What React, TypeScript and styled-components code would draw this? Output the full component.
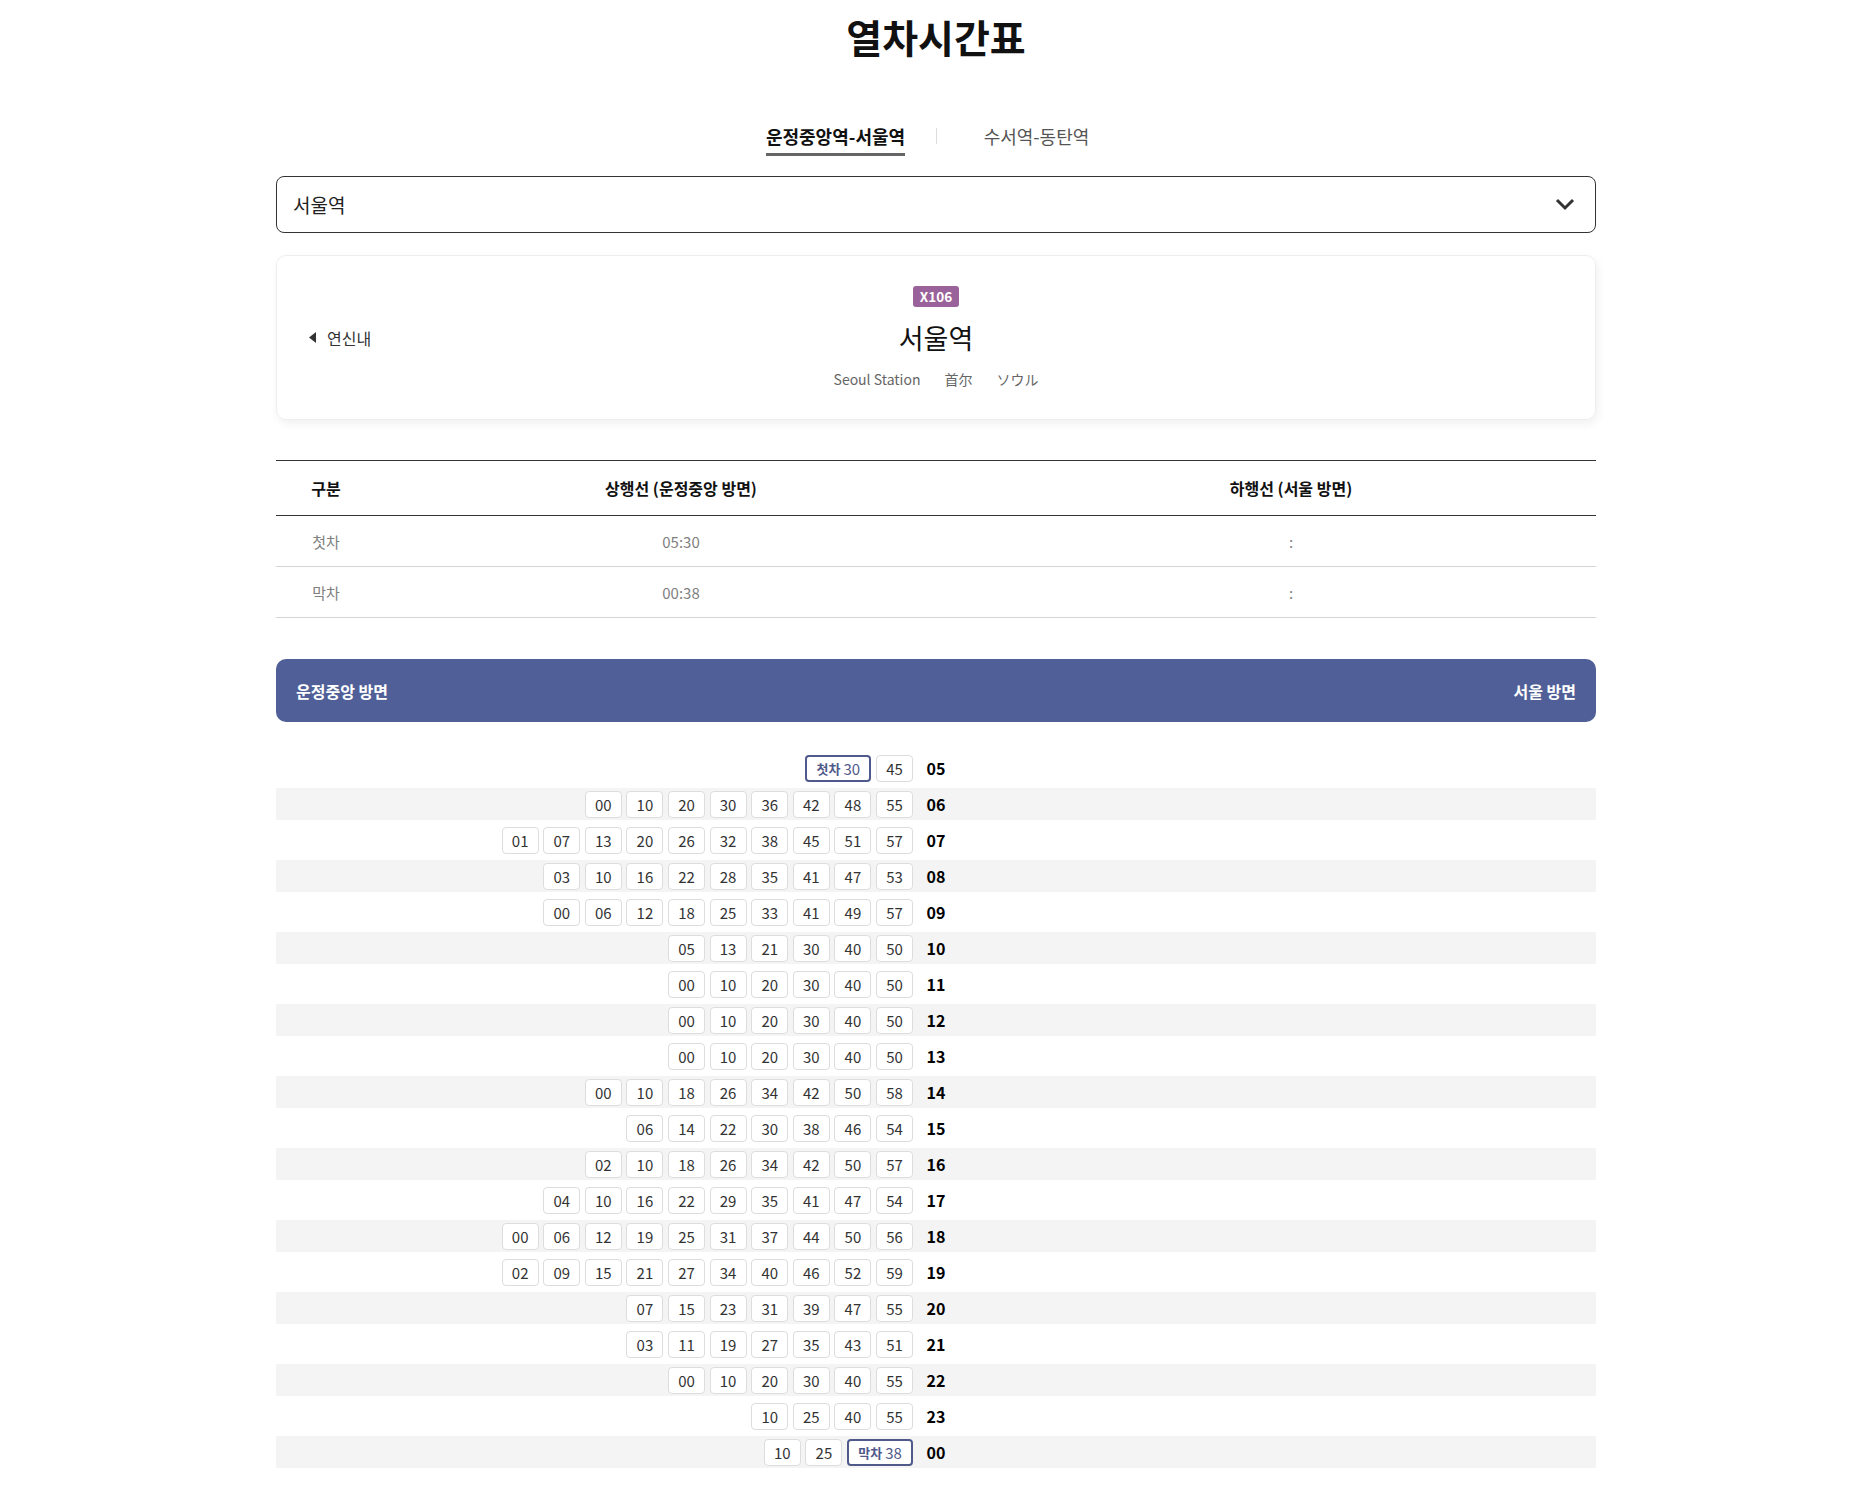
import React from 'react';
import styled, { createGlobalStyle } from 'styled-components';

const GlobalStyle = createGlobalStyle`
  * { box-sizing: border-box; }
  body {
    margin: 0;
    padding: 0 0 0 7px;
    background: #fff;
    font-family: "Noto Sans CJK KR", "Noto Sans", sans-serif;
    color: #222;
  }
`;

const Page = styled.div`
  width: 1320px;
  margin: 0 auto;
  padding-top: 12px;
  padding-bottom: 34px;
`;

const Title = styled.h1`
  margin: 0;
  text-align: center;
  font-size: 39px;
  line-height: 48px;
  font-weight: 700;
  color: #111;
`;

const Tabs = styled.div`
  display: flex;
  justify-content: center;
  align-items: center;
  margin-top: 64px;
`;

const Tab = styled.div`
  width: 200px;
  text-align: center;
`;

const TabLabel = styled.span<{ $active?: boolean }>`
  display: inline-block;
  font-size: 18px;
  line-height: 24px;
  padding-bottom: 5px;
  font-weight: ${(p) => (p.$active ? 700 : 400)};
  color: ${(p) => (p.$active ? '#111' : '#555')};
  border-bottom: 3px solid ${(p) => (p.$active ? '#666' : 'transparent')};
`;

const TabDivider = styled.span`
  width: 1px;
  height: 16px;
  background: #ddd;
  margin-bottom: 8px;
`;

const SelectBox = styled.div`
  margin-top: 20px;
  height: 57px;
  border: 1px solid #333;
  border-radius: 8px;
  display: flex;
  align-items: center;
  justify-content: space-between;
  padding: 0 20px 0 16px;
  font-size: 19px;
  color: #222;
`;

const Card = styled.div`
  margin-top: 22px;
  height: 165px;
  border: 1px solid #eee;
  border-radius: 10px;
  box-shadow: 2px 4px 10px rgba(0, 0, 0, 0.06);
  display: grid;
  grid-template-columns: 1fr auto 1fr;
  align-items: center;
`;

const PrevStation = styled.div`
  display: flex;
  align-items: center;
  gap: 11px;
  padding-left: 32px;
  font-size: 16px;
  color: #333;
`;

const StationInfo = styled.div`
  display: flex;
  flex-direction: column;
  align-items: center;
`;

const Badge = styled.span`
  display: inline-flex;
  align-items: center;
  justify-content: center;
  height: 21px;
  padding: 0 7px;
  border-radius: 3px;
  background: #9a629a;
  color: #fff;
  font-size: 13.5px;
  font-weight: 700;
`;

const StationName = styled.div`
  margin-top: 14px;
  font-size: 27px;
  line-height: 34px;
  color: #111;
`;

const SubNames = styled.div`
  margin-top: 13px;
  display: flex;
  gap: 24px;
  font-size: 14px;
  line-height: 22px;
  color: #666;
`;

const Table = styled.div`
  margin-top: 40px;
  border-top: 1px solid #333;
`;

const TRow = styled.div<{ $head?: boolean }>`
  display: grid;
  grid-template-columns: 100px 1fr 1fr;
  align-items: center;
  height: ${(p) => (p.$head ? '55px' : '51px')};
  border-bottom: 1px solid ${(p) => (p.$head ? '#333' : '#d4d4d4')};
  font-size: ${(p) => (p.$head ? '16px' : '15px')};
  font-weight: ${(p) => (p.$head ? 700 : 400)};
  color: ${(p) => (p.$head ? '#111' : '#808080')};
  text-align: center;
`;

const DirectionBar = styled.div`
  margin-top: 41px;
  height: 63px;
  border-radius: 10px;
  background: #505f97;
  color: #fff;
  display: flex;
  align-items: center;
  justify-content: space-between;
  padding: 0 20px 0 20px;
  font-size: 16px;
  font-weight: 700;
`;

const Timetable = styled.div`
  margin-top: 30px;
  display: flex;
  flex-direction: column;
  gap: 4px;
`;

const HourRow = styled.div<{ $shade: boolean }>`
  display: grid;
  grid-template-columns: 1fr 40px 1fr;
  align-items: center;
  height: 32px;
  background: ${(p) => (p.$shade ? '#f4f4f4' : 'transparent')};
`;

const Minutes = styled.div`
  display: flex;
  justify-content: flex-end;
  gap: 4.6px;
  padding-right: 3px;
`;

const MinuteBox = styled.span<{ $special?: boolean }>`
  display: inline-flex;
  align-items: center;
  justify-content: center;
  gap: 3px;
  min-width: ${(p) => (p.$special ? '66px' : '37px')};
  height: 27px;
  background: #fff;
  border: ${(p) => (p.$special ? '2px solid #4f5a8a' : '1px solid #ddd')};
  border-radius: 4px;
  font-size: 15px;
  color: ${(p) => (p.$special ? '#4f5a8a' : '#333')};
`;

const Tag = styled.b`
  font-size: 13px;
  font-weight: 700;
`;

const Hour = styled.span`
  text-align: center;
  font-size: 16px;
  font-weight: 700;
  color: #000;
`;

const schedule: [string, string[]][] = [
  ['05', ['첫차30', '45']],
  ['06', ['00', '10', '20', '30', '36', '42', '48', '55']],
  ['07', ['01', '07', '13', '20', '26', '32', '38', '45', '51', '57']],
  ['08', ['03', '10', '16', '22', '28', '35', '41', '47', '53']],
  ['09', ['00', '06', '12', '18', '25', '33', '41', '49', '57']],
  ['10', ['05', '13', '21', '30', '40', '50']],
  ['11', ['00', '10', '20', '30', '40', '50']],
  ['12', ['00', '10', '20', '30', '40', '50']],
  ['13', ['00', '10', '20', '30', '40', '50']],
  ['14', ['00', '10', '18', '26', '34', '42', '50', '58']],
  ['15', ['06', '14', '22', '30', '38', '46', '54']],
  ['16', ['02', '10', '18', '26', '34', '42', '50', '57']],
  ['17', ['04', '10', '16', '22', '29', '35', '41', '47', '54']],
  ['18', ['00', '06', '12', '19', '25', '31', '37', '44', '50', '56']],
  ['19', ['02', '09', '15', '21', '27', '34', '40', '46', '52', '59']],
  ['20', ['07', '15', '23', '31', '39', '47', '55']],
  ['21', ['03', '11', '19', '27', '35', '43', '51']],
  ['22', ['00', '10', '20', '30', '40', '55']],
  ['23', ['10', '25', '40', '55']],
  ['00', ['10', '25', '막차38']],
];

const Minute = ({ value }: { value: string }) => {
  const special = value.startsWith('첫차') || value.startsWith('막차');
  if (!special) return <MinuteBox>{value}</MinuteBox>;
  return (
    <MinuteBox $special>
      <Tag>{value.slice(0, 2)}</Tag>
      {value.slice(2)}
    </MinuteBox>
  );
};

const App = () => {
  return (
    <Page>
      <GlobalStyle />
      <Title>열차시간표</Title>

      <Tabs>
        <Tab>
          <TabLabel $active>운정중앙역-서울역</TabLabel>
        </Tab>
        <TabDivider />
        <Tab>
          <TabLabel>수서역-동탄역</TabLabel>
        </Tab>
      </Tabs>

      <SelectBox>
        <span>서울역</span>
        <svg width="20" height="13" viewBox="0 0 20 13">
          <path d="M2 2l8 8 8-8" fill="none" stroke="#333" strokeWidth="3" />
        </svg>
      </SelectBox>

      <Card>
        <PrevStation>
          <svg width="7" height="11" viewBox="0 0 7 11">
            <path d="M7 0v11L0 5.5z" fill="#333" />
          </svg>
          연신내
        </PrevStation>
        <StationInfo>
          <Badge>X106</Badge>
          <StationName>서울역</StationName>
          <SubNames>
            <span>Seoul Station</span>
            <span>首尔</span>
            <span>ソウル</span>
          </SubNames>
        </StationInfo>
        <div />
      </Card>

      <Table>
        <TRow $head>
          <span>구분</span>
          <span>상행선 (운정중앙 방면)</span>
          <span>하행선 (서울 방면)</span>
        </TRow>
        <TRow>
          <span>첫차</span>
          <span>05:30</span>
          <span>:</span>
        </TRow>
        <TRow>
          <span>막차</span>
          <span>00:38</span>
          <span>:</span>
        </TRow>
      </Table>

      <DirectionBar>
        <span>운정중앙 방면</span>
        <span>서울 방면</span>
      </DirectionBar>

      <Timetable>
        {schedule.map(([hour, mins], i) => (
          <HourRow key={hour} $shade={i % 2 === 1}>
            <Minutes>
              {mins.map((m) => (
                <Minute key={m} value={m} />
              ))}
            </Minutes>
            <Hour>{hour}</Hour>
            <div />
          </HourRow>
        ))}
      </Timetable>
    </Page>
  );
};

export default App;
